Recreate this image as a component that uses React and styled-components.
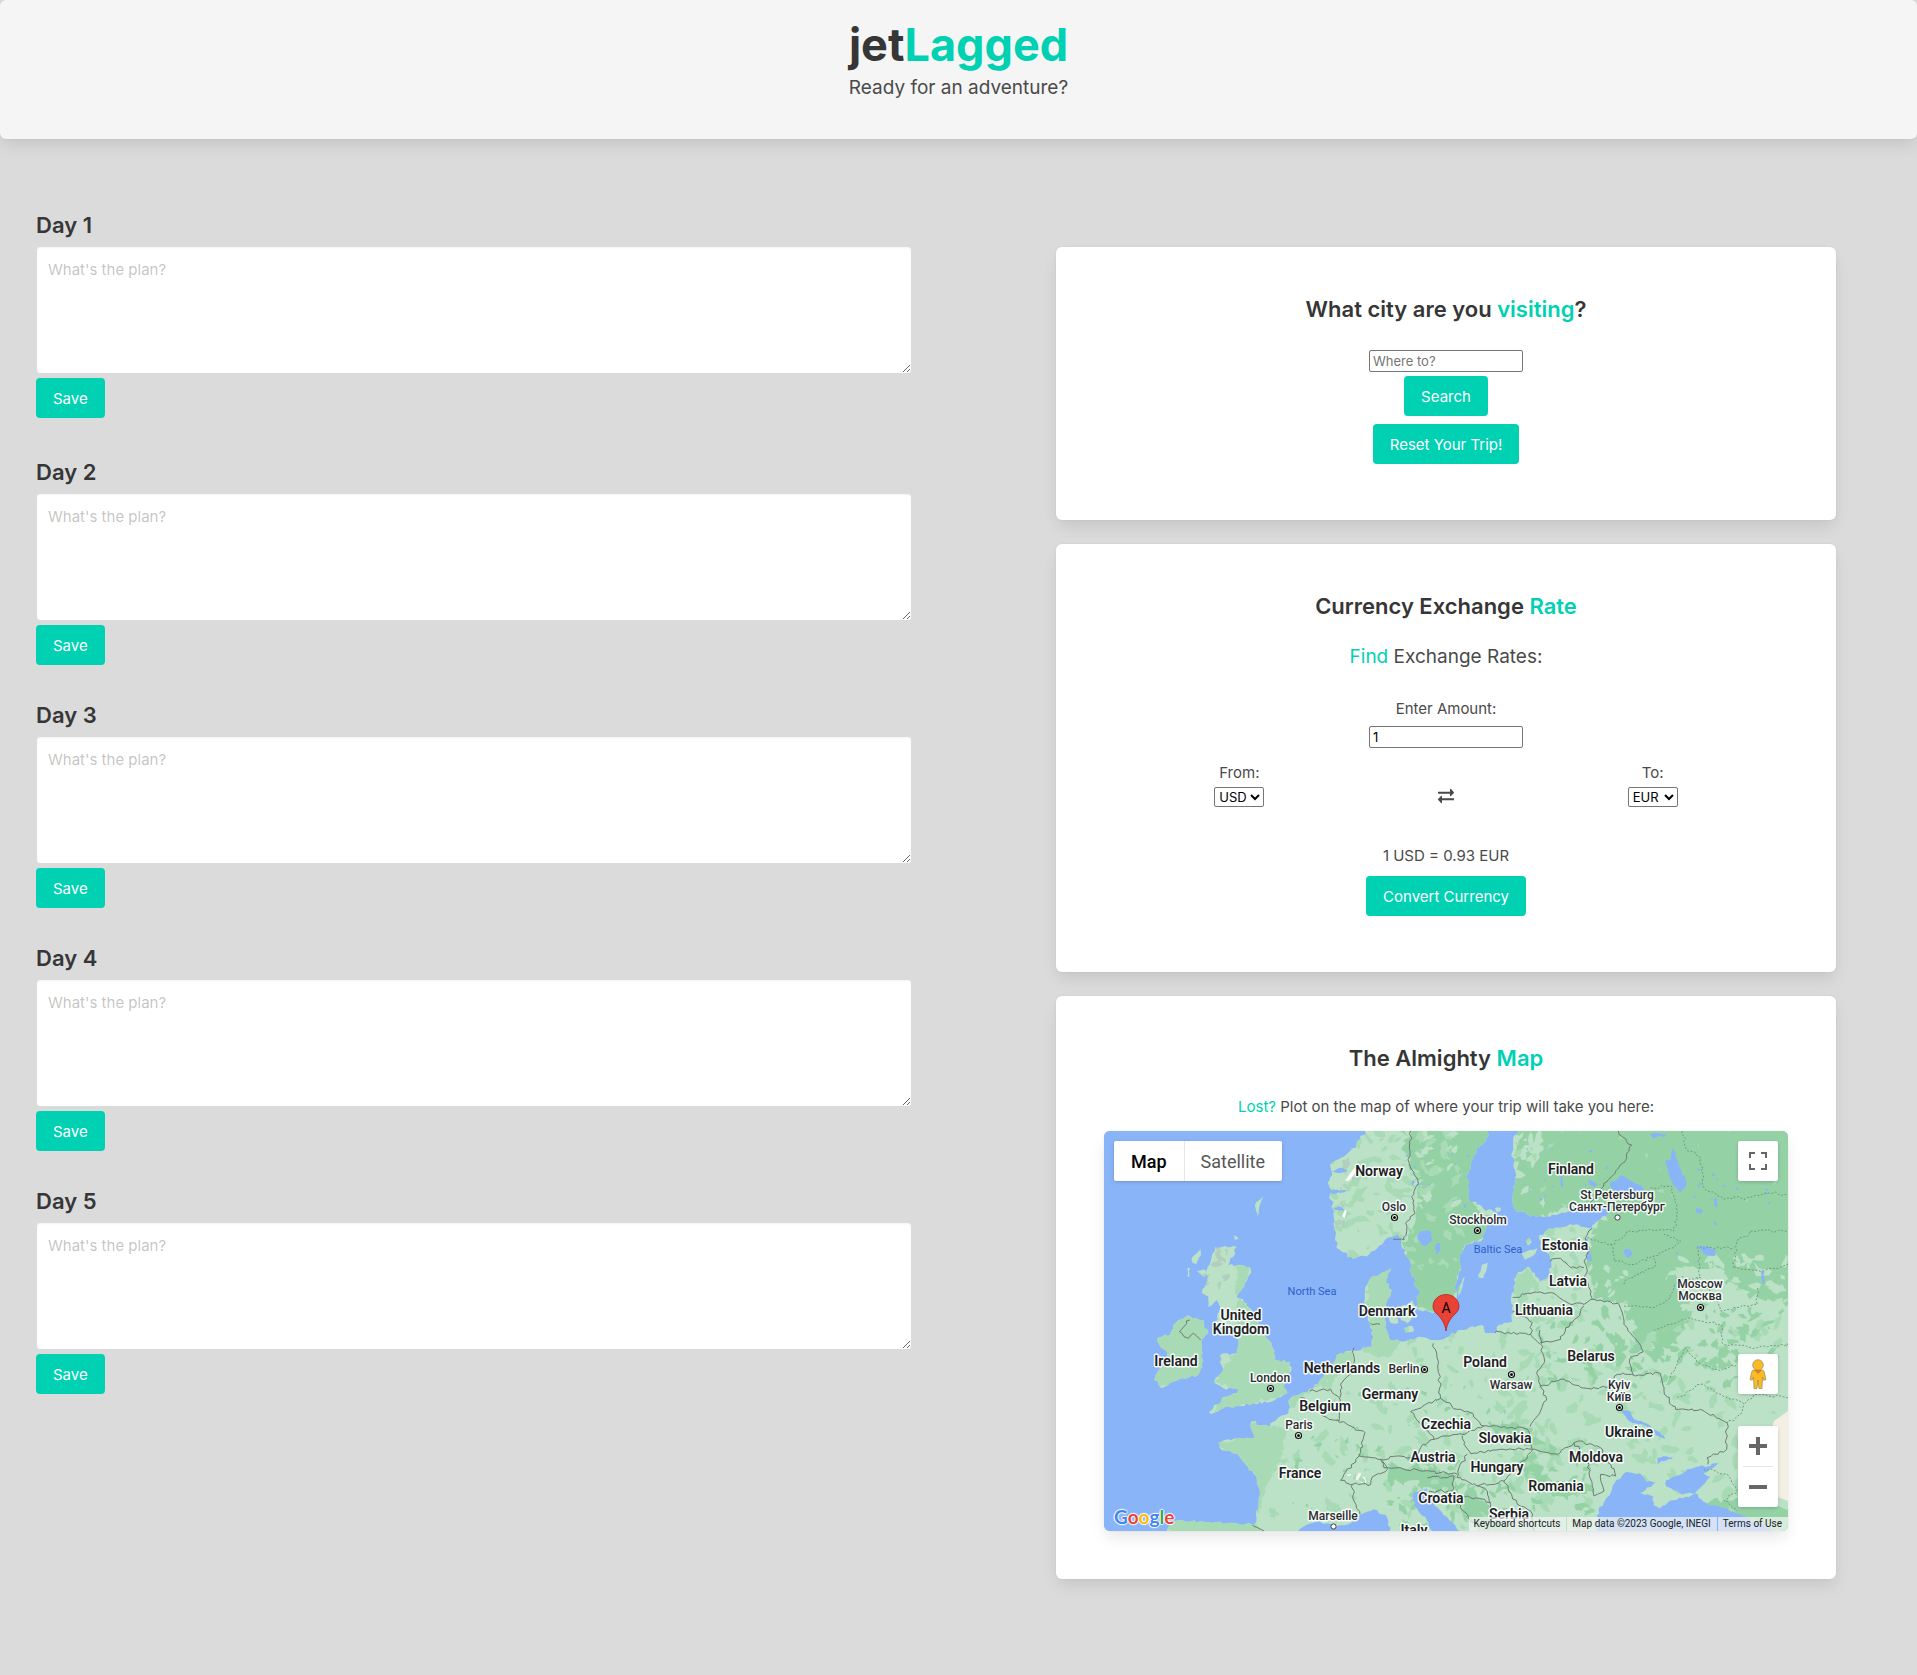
import React, { useState } from "react";
import styled, { createGlobalStyle } from "styled-components";

const colors = {
  primary: "#00d1b2",
  heading: "#363636",
  text: "#4a4a4a",
  page: "#dbdbdb",
  water: "#8ab4f8",
  landLight: "#bbe2c6",
  landMid: "#a8dab5",
  landDark: "#94d2a5",
};

const boxShadow =
  "0 8px 16px -2px rgba(10, 10, 10, 0.1), 0 0 0 1px rgba(10, 10, 10, 0.02)";

const GlobalStyle = createGlobalStyle`
  *, *::before, *::after { box-sizing: border-box; }
  body {
    margin: 0;
    background: ${colors.page};
    color: ${colors.text};
    font-family: Inter, "Liberation Sans", sans-serif;
    font-size: 15px;
    line-height: 24px;
  }
  h1, h2, p { margin: 0; }
`;

const Header = styled.header`
  background: #f5f5f5;
  border-radius: 6px;
  box-shadow: ${boxShadow};
  padding: 18px 20px 39px;
  text-align: center;
`;

const Brand = styled.h1`
  margin-bottom: 3px;
  color: ${colors.heading};
  font-size: 45px;
  font-weight: 700;
  line-height: 54px;
`;

const Accent = styled.span`
  color: ${colors.primary};
`;

const Lead = styled.p`
  font-size: 19px;
  line-height: 25px;
`;

const Main = styled.main`
  display: grid;
  grid-template-columns: minmax(0, 876fr) minmax(0, 780fr);
  column-gap: 144px;
  padding: 72px 81px 96px 36px;
`;

const Days = styled.section`
  display: flex;
  flex-direction: column;
  gap: 36px;
`;

const Day = styled.form`
  display: flex;
  flex-direction: column;
  align-items: flex-start;

  &:first-child {
    padding-bottom: 4px;
  }
`;

const Title = styled.h2`
  color: ${colors.heading};
  font-size: 22px;
  font-weight: 600;
  line-height: 29px;
`;

const Plan = styled.textarea`
  display: block;
  width: 100%;
  height: 128px;
  margin: 6px 0 4px;
  padding: 11px;
  border: 1px solid ${colors.page};
  border-radius: 4px;
  background: #fff;
  box-shadow: inset 0 1px 2px rgba(10, 10, 10, 0.05);
  color: ${colors.heading};
  font: inherit;
  resize: vertical;

  &::placeholder {
    color: rgba(54, 54, 54, 0.3);
  }
`;

const Button = styled.button`
  height: 40px;
  padding: 1px 17px 0;
  border: 0;
  border-radius: 4px;
  background: ${colors.primary};
  color: #fff;
  font: inherit;
  cursor: pointer;
`;

const Tools = styled.section`
  display: flex;
  flex-direction: column;
  gap: 24px;
  padding-top: 36px;
`;

const Card = styled.article`
  display: flex;
  flex-direction: column;
  align-items: center;
  padding: 48px 48px ${(p) => p.$bottom || 56}px;
  border-radius: 6px;
  background: #fff;
  box-shadow: ${boxShadow};
  text-align: center;
`;

const SearchForm = styled.form`
  display: flex;
  flex-direction: column;
  align-items: center;
  gap: 4px;
  margin: 26px 0 8px;
`;

const TextField = styled.input`
  width: 154px;
  height: 22px;
  padding: 1px 3px;
  border: 1px solid #767676;
  border-radius: 2px;
  background: #fff;
  color: #000;
  font-family: inherit;
  font-size: 13px;

  &::placeholder {
    color: #757575;
  }
`;

const ExchangeLead = styled(Lead)`
  margin: 23px 0 28px;
`;

const Amount = styled.div`
  display: flex;
  flex-direction: column;
  align-items: center;
  gap: 5px;
`;

const Currencies = styled.div`
  display: grid;
  grid-template-columns: repeat(3, 1fr);
  align-items: end;
  justify-items: center;
  align-self: stretch;
  margin: 13px 0 37px;
  padding: 0 32px;
`;

const Currency = styled.div`
  display: flex;
  flex-direction: column;
  align-items: center;
  gap: 2px;
`;

const Select = styled.select`
  width: 50px;
  height: 20px;
  padding: 0;
  border: 1px solid #767676;
  border-radius: 2px;
  background-color: #fff;
  color: #000;
  font-family: inherit;
  font-size: 13px;
`;

const Swap = styled.svg`
  width: 16px;
  height: 16px;
  margin-bottom: 3px;
  fill: ${colors.text};
`;

const Result = styled.p`
  margin-bottom: 8px;
`;

const MapLead = styled.p`
  margin: 22px 0 12px;
`;

const MapFrame = styled.div`
  position: relative;
  height: 400px;
  overflow: hidden;
  border-radius: 6px;
  background: ${colors.water};
  font-family: Roboto, sans-serif;
`;

const MapShadow = styled.div`
  align-self: stretch;
  border-radius: 6px;
  box-shadow: ${boxShadow};
`;

const MapCanvas = styled.svg`
  display: block;
  width: 100%;
  height: 100%;
`;

const CountryName = styled.text`
  fill: #202124;
  stroke: #fff;
  stroke-width: 3px;
  stroke-linejoin: round;
  stroke-opacity: 0.9;
  paint-order: stroke;
  font-size: 14px;
  font-weight: 600;
  text-anchor: middle;
`;

const CityName = styled(CountryName)`
  fill: #2b2e30;
  font-size: 12px;
  font-weight: 500;
`;

const SeaName = styled.text`
  fill: #2a62c9;
  font-size: 11px;
  text-anchor: middle;
`;

const PinLetter = styled.text`
  fill: #000;
  font-size: 14px;
  text-anchor: middle;
`;

const Control = styled.div`
  position: absolute;
  display: flex;
  flex-direction: ${(p) => (p.$row ? "row" : "column")};
  align-items: center;
  top: ${(p) => p.$top}px;
  ${(p) => (p.$left ? "left" : "right")}: 10px;
  border-radius: 2px;
  background: #fff;
  box-shadow: 0 1px 4px -1px rgba(0, 0, 0, 0.3);
`;

const MapType = styled.button`
  height: 40px;
  padding: 0 17px;
  border: 0;
  background: none;
  color: ${(p) => (p.$active ? "#000" : "#565656")};
  font-family: inherit;
  font-size: 18px;
  font-weight: ${(p) => (p.$active ? 500 : 400)};
  cursor: pointer;

  & + & {
    padding-left: 16px;
    border-left: 1px solid #e6e6e6;
  }
`;

const IconButton = styled.button`
  display: grid;
  place-items: center;
  width: 40px;
  height: 40px;
  padding: 0;
  border: 0;
  background: none;
  cursor: pointer;
`;

const Divider = styled.span`
  width: 30px;
  height: 1px;
  background: #e6e6e6;
`;

const Credits = styled.div`
  position: absolute;
  right: 0;
  bottom: 0;
  display: flex;
  height: 14px;
  color: #202124;
  font-size: 10px;
  line-height: 14px;
  white-space: nowrap;
`;

const creditItem = `
  height: 14px;
  padding: 0 6px 0 5px;
  border: 0;
  background: rgba(245, 245, 245, 0.7);
  color: inherit;
  font: inherit;
  text-decoration: none;
`;

const CreditButton = styled.button`
  ${creditItem}
`;
const CreditText = styled.span`
  ${creditItem}
  margin: 0 1px;
`;
const CreditLink = styled.a`
  ${creditItem}
`;

const Logo = styled.a`
  position: absolute;
  left: 10px;
  bottom: 0;
  font-family: Lato, sans-serif;
  font-size: 19px;
  font-weight: 700;
  line-height: 28px;
  text-decoration: none;
  text-shadow: 1px 0 1px #fff, -1px 0 1px #fff, 0 1px 1px #fff, 0 -1px 1px #fff;
`;

const Letter = styled.span`
  color: ${(p) => p.$tone};
`;

/* ---- map geometry: three units per pixel ---- */

const continent =
  "1243,0 1233,12 1223,67 1236,127 1226,187 1233,237 1298,259 1358,252 1438,222 1498,227 1518,242 1488,267 1463,292 1408,282 1338,292 1306,312 1308,347 1338,377 1338,427 1308,452 1293,427 1270,407 1238,432 1223,487 1226,572 1183,582 1173,607 1143,605 1133,582 1068,597 1008,627 988,627 948,617 898,632 858,627 848,597 843,537 863,477 845,455 863,412 843,422 798,442 783,482 786,537 798,577 808,617 803,647 748,657 698,672 688,697 658,737 628,772 558,802 553,847 508,872 498,887 458,882 455,869 441,872 450,922 398,922 343,932 353,957 398,967 418,992 458,1037 468,1087 458,1162 448,1182 398,1177 298,1172 218,1169 193,1187 190,1210 573,1210 598,1187 648,1172 698,1187 738,1177 768,1152 808,1135 848,1157 863,1210 988,1210 968,1167 933,1127 925,1087 968,1072 973,1097 1008,1137 1048,1177 1078,1210 2062,1210 2062,-10 1243,-10";
const scandinavia =
  "793,-10 758,37 718,77 678,102 683,122 676,167 683,227 688,277 693,327 708,357 748,385 788,377 828,342 863,317 883,297 893,327 908,377 923,427 943,477 943,537 988,547 1025,540 1048,527 1063,437 1073,367 1083,342 1138,322 1148,287 1178,272 1173,247 1118,222 1093,197 1093,127 1108,77 1138,37 1158,-10";
const britain =
  "333,347 398,347 388,377 373,402 438,407 441,427 423,457 398,497 428,517 443,537 470,590 485,617 503,637 513,687 558,692 561,722 538,767 550,787 503,812 448,817 398,825 358,832 323,849 315,845 353,802 398,787 403,775 358,772 330,752 358,717 348,672 398,667 403,627 400,600 360,600 333,577 348,537 338,507 308,537 313,497 293,487 308,457 308,417 323,377";
const ireland =
  "163,617 198,612 213,577 248,555 298,567 313,607 293,627 293,657 296,707 283,732 238,742 173,772 150,747 158,727 180,705 188,660 163,637";
const islands = [
  "453,222 478,195 470,215 461,257 456,238",
  "390,312 400,318 404,324 392,326",
  "262,385 290,355 291,372 277,400 266,395",
  "278,420 300,415 310,428 300,438",
  "250,412 258,410 256,437 250,437",
  "888,527 908,522 925,507 935,532 928,557 910,577 890,567",
  "850,550 878,553 883,577 862,577",
  "900,590 925,585 930,600 905,604",
  "1123,437 1133,402 1151,395 1148,415 1138,442 1126,440",
  "1060,480 1086,427 1076,467 1063,495",
  "1253,367 1278,357 1300,352 1293,370 1263,387",
  "1266,332 1278,322 1283,334 1272,344",
  "1173,232 1190,230 1190,240 1178,244",
];
const blackSea =
  "1478,1210 1483,1137 1518,1092 1538,1047 1568,1022 1608,1027 1628,1052 1655,1055 1608,1085 1648,1097 1648,1122 1668,1132 1698,1109 1738,1102 1773,1087 1808,1117 1888,1142 1990,1185 2010,1210";
const azov =
  "1688,1067 1686,1048 1708,1037 1768,1012 1843,997 1798,1027 1818,1037 1788,1072 1773,1087 1728,1087";
const lakes = [
  "940,320 955,300 975,298 985,325 962,345 948,335",
  "996,340 1012,335 1008,360 994,380",
  "1518,157 1535,150 1553,132 1580,150 1608,162 1630,187 1600,187 1568,200 1530,180",
  "1683,90 1700,87 1708,47 1722,90 1748,157 1728,185 1700,147",
  "1558,360 1576,355 1586,370 1568,380",
  "1776,342 1800,345 1835,355 1830,375 1806,372",
  "1442,322 1452,325 1464,388 1454,392 1445,350",
  "1372,135 1378,138 1376,170 1368,160",
  "1452,145 1480,160 1472,168 1455,158",
  "1775,232 1798,238 1790,250 1776,244",
  "1830,202 1842,205 1838,230 1830,222",
  "1640,10 1660,5 1688,12 1650,22",
  "1974,418 1982,425 1980,470 1975,455",
  "1545,828 1580,845 1590,865 1640,885 1640,890 1575,870",
  "1650,895 1680,915 1684,925 1655,912",
  "1660,980 1706,978 1704,984 1672,990 1655,1008",
  "676,182 720,176 740,180 720,184 684,188",
  "683,120 715,110 730,118 700,126",
  "686,232 706,226 722,236 700,238",
];
const darkRegions = [
  "893,-10 1170,-10 1110,220 1180,290 1080,350 1050,527 990,550 940,530 900,350 935,250 945,150 900,60",
  "1243,-10 2062,-10 2062,530 1900,480 1830,400 1700,420 1660,530 1560,520 1470,500 1450,380 1470,290 1530,240 1440,215 1300,262 1220,240",
  "1560,480 1720,430 1760,560 1700,650 1600,640",
  "1160,870 1270,890 1370,975 1350,985 1260,930 1170,905",
  "860,1000 960,1010 1060,1040 1050,1090 980,1070 900,1050 840,1065",
  "1100,1060 1150,1120 1220,1200 1120,1200 1050,1120",
  "1240,1000 1290,960 1340,1060 1450,1070 1420,1100 1300,1090",
  "1808,1117 1900,1100 2062,1130 2062,1210 1990,1200",
];
const midRegions = [
  "398,400 441,407 423,457 398,497 443,537 503,637 561,700 550,787 323,849 353,802 403,775 330,752 403,640",
  "150,555 313,555 313,660 296,740 150,772",
  "441,872 498,887 553,900 530,980 490,1060 458,1162 448,1030 343,940 398,922",
  "783,412 863,412 848,597 900,632 850,680 748,657 800,640",
  "700,672 748,657 740,720 628,772 560,830 556,802",
  "1226,487 1236,432 1270,410 1300,452 1250,540",
  "193,1165 448,1175 470,1210 190,1210",
];
const borders = [
  "920,0 918,60 916,97 943,157 923,197 933,247 908,272 900,327 868,325",
  "1543,0 1583,42 1568,82 1498,167 1458,217",
  "1465,292 1445,320 1455,350 1440,390 1450,420 1440,440 1455,470 1465,505",
  "1338,392 1370,382 1400,410 1440,410",
  "1226,500 1270,487 1350,487 1400,520 1440,520 1465,505",
  "1465,505 1510,510 1545,520 1560,580 1600,630 1618,662 1578,682 1588,732",
  "1588,732 1668,727 1680,780 1715,835 1790,835 1870,877 1868,955 1810,980 1812,1000",
  "1310,765 1370,745 1430,770 1510,770 1540,730 1588,732",
  "1308,597 1320,697 1298,727 1328,807 1278,887",
  "1308,633 1370,625 1385,590 1420,560 1440,525",
  "1173,605 1280,610 1285,575 1226,540",
  "1280,610 1308,640",
  "988,637 1003,697 1010,802",
  "1010,802 965,820 920,842 960,890 990,925 1030,915 1090,905 1140,885 1100,845 1060,835 1010,802",
  "1140,885 1180,885 1270,895 1285,955 1200,955 1100,968 1080,940 1075,915",
  "1090,970 1065,1010 1060,1040 1120,1065 1200,1050 1240,1010 1285,955",
  "990,925 950,950 940,980 880,975 830,985 840,1010 900,1015 960,1020 1060,1030",
  "1285,955 1360,970 1410,935",
  "1410,935 1450,990 1470,1095 1500,1080 1490,1030 1535,1035 1520,1000 1490,950 1430,930 1410,935",
  "700,865 740,885 783,905 765,975",
  "765,975 720,1030 710,1048 745,1060 800,1060 810,1035 850,1015 830,985 765,975",
  "745,1060 750,1110 768,1150",
  "618,780 680,775 705,800 705,870 670,860 620,820 590,800",
  "750,650 745,720 710,760 708,800",
  "1120,1065 1150,1080 1160,1120 1180,1180",
  "1200,1050 1240,1120 1280,1140 1290,1200",
  "1160,1115 1090,1095 1050,1100 1100,1170 1150,1190",
  "970,1040 1050,1035 1045,1080 975,1080",
  "258,567 226,602 253,622 268,607 290,627",
  "445,1182 480,1200",
  "800,577 828,580",
];
const provinces = [
  "1735,0 1745,50 1790,80 1800,170 1860,205 1930,200 1990,185 2052,190",
  "1640,170 1700,165 1720,240 1710,300 1580,300 1520,340",
  "1450,320 1520,340 1530,390 1590,400 1650,375 1710,350 1730,330 1680,310",
  "1560,460 1580,440 1650,410 1650,375",
  "1890,410 1900,330 1950,300 2052,300",
  "1890,410 1980,420 2052,400",
  "1560,525 1650,530 1700,500 1720,440 1790,440 1780,350 1890,350",
  "1780,440 1830,490 1850,540 1960,520 1960,470",
  "1650,600 1700,580 1760,560 1850,580 1860,640 1960,650 2052,640",
  "1700,740 1740,650 1790,700 1850,720 1900,700",
  "1720,800 1790,760 1850,790 1920,820 1960,790 2052,800",
  "1870,877 1910,850 1920,820",
  "1800,1015 1870,1030 1900,1080 1860,1110 1900,1140",
];

function makeRandom(seed) {
  let s = seed;
  return () => {
    s = (s * 16807) % 2147483647;
    return s / 2147483647;
  };
}

const parse = (list) => list.split(" ").map((pair) => pair.split(",").map(Number));

/* Breaks each straight run into short jagged steps so coasts look natural. */
function roughen(list, amount, closed) {
  const random = makeRandom(list.length * 97 + 11);
  const points = parse(list);
  const out = [];
  const last = closed ? points.length : points.length - 1;
  for (let i = 0; i < last; i += 1) {
    const [x1, y1] = points[i];
    const [x2, y2] = points[(i + 1) % points.length];
    const steps = Math.max(1, Math.round(Math.hypot(x2 - x1, y2 - y1) / 10));
    out.push([x1, y1]);
    for (let k = 1; k < steps; k += 1) {
      const t = k / steps;
      out.push([
        Math.round(x1 + (x2 - x1) * t + (random() - 0.5) * amount),
        Math.round(y1 + (y2 - y1) * t + (random() - 0.5) * amount),
      ]);
    }
  }
  if (!closed) out.push(points[points.length - 1]);
  return `M${out.map((p) => p.join(" ")).join("L")}${closed ? "Z" : ""}`;
}

/* Scatters small irregular terrain patches over a rectangle. */
function patches(seed, x, y, w, h, count, size) {
  const random = makeRandom(seed);
  let d = "";
  for (let i = 0; i < count; i += 1) {
    const cx = x + random() * w;
    const cy = y + random() * h;
    const r = size * (0.3 + random());
    const tilt = random() * Math.PI;
    const corners = [];
    for (let k = 0; k < 9; k += 1) {
      const a = (k / 9) * Math.PI * 2;
      const rad = r * (0.4 + random() * 0.9);
      const px = Math.cos(a) * rad;
      const py = Math.sin(a) * rad * 0.5;
      corners.push(
        `${Math.round(cx + px * Math.cos(tilt) - py * Math.sin(tilt))} ${Math.round(
          cy + px * Math.sin(tilt) + py * Math.cos(tilt)
        )}`
      );
    }
    d += `M${corners.join("L")}Z`;
  }
  return d;
}

const landPath = [
  roughen(continent, 9, true),
  roughen(scandinavia, 14, true),
  roughen(britain, 9, true),
  roughen(ireland, 10, true),
  ...islands.map((i) => roughen(i, 4, true)),
].join("");

const terrain = [
  [patches(21, 440, 600, 900, 600, 150, 22), colors.landMid],
  [patches(34, 1220, 560, 830, 620, 170, 24), colors.landMid],
  [patches(55, 676, 0, 230, 390, 60, 24), colors.landMid],
  [patches(13, 900, 0, 160, 260, 26, 24), colors.landMid],
  [patches(14, 900, 300, 170, 120, 14, 20), colors.landMid],
  [patches(77, 1230, 20, 90, 220, 18, 24), colors.landLight],
  [patches(78, 1240, 0, 780, 260, 20, 11), colors.landMid],
  [patches(81, 1250, 280, 200, 300, 50, 18), colors.landMid],
  [patches(82, 1460, 400, 110, 100, 12, 15), colors.landLight],
  [patches(91, 1720, 380, 330, 260, 60, 22), colors.landLight],
  [patches(92, 1600, 520, 450, 240, 80, 20), colors.landDark],
  [patches(93, 1300, 540, 300, 230, 40, 22), colors.landDark],
  [patches(94, 740, 700, 500, 330, 34, 12), colors.landDark],
  [patches(95, 560, 900, 230, 250, 14, 14), colors.landDark],
  [patches(96, 860, 990, 420, 200, 60, 16), colors.landDark],
  [patches(97, 1290, 980, 180, 200, 20, 18), colors.landDark],
  [patches(98, 900, 0, 170, 240, 26, 16), colors.landLight],
  [patches(99, 700, 20, 60, 340, 10, 14), "#b1cfbc"],
  [patches(44, 300, 340, 90, 140, 12, 18), "#b1cfbc"],
  [patches(45, 1440, 60, 600, 340, 30, 6), colors.water],
  [patches(46, 910, 60, 240, 320, 26, 6), colors.water],
  [patches(47, 1270, 20, 240, 200, 20, 5), colors.water],
  [patches(48, 735, 1020, 70, 40, 6, 11), "#f1f5f2"],
];

const countries = [
  ["Norway", 275, 45],
  ["United", 137, 189],
  ["Kingdom", 137, 203],
  ["Denmark", 283, 185],
  ["Finland", 467, 43],
  ["Estonia", 461, 119],
  ["Latvia", 464, 155],
  ["Lithuania", 440, 184],
  ["Ireland", 72, 235],
  ["Netherlands", 238, 242],
  ["Germany", 286, 268],
  ["Belgium", 221, 280],
  ["France", 196, 347],
  ["Czechia", 342, 298],
  ["Austria", 329, 331],
  ["Croatia", 337, 372],
  ["Italy", 310, 404],
  ["Serbia", 405, 388],
  ["Poland", 381, 236],
  ["Belarus", 487, 230],
  ["Slovakia", 401, 312],
  ["Ukraine", 525, 306],
  ["Moldova", 492, 331],
  ["Hungary", 393, 341],
  ["Romania", 452, 360],
];

const cities = [
  ["Oslo", 290, 80],
  ["Stockholm", 374, 93],
  ["St Petersburg", 513, 68],
  ["Санкт-Петербург", 513, 80],
  ["Moscow", 596, 157],
  ["Москва", 596, 169],
  ["London", 166, 251],
  ["Berlin", 300, 242],
  ["Paris", 195, 298],
  ["Marseille", 229, 389],
  ["Warsaw", 407, 258],
  ["Kyiv", 515, 258],
  ["Київ", 515, 270],
];

const capitals = [
  [290, 86],
  [373, 99],
  [596, 176],
  [166, 257],
  [320, 238],
  [194, 304],
  [407, 243],
  [515, 276],
];
const towns = [
  [513, 86],
  [229, 395],
];

function EuropeMap() {
  return (
    <MapCanvas viewBox="0 0 684 400" preserveAspectRatio="xMidYMid slice" role="img" aria-label="Map of Europe">
      <defs>
        <clipPath id="land">
          <path d={landPath} />
        </clipPath>
      </defs>
      <rect width="684" height="400" fill={colors.water} />
      <g transform="scale(0.33333)">
        <path d={landPath} fill={colors.landLight} />
        <g clipPath="url(#land)">
          {midRegions.map((r) => (
            <path key={r} d={roughen(r, 16, true)} fill={colors.landMid} />
          ))}
          {darkRegions.map((r) => (
            <path key={r} d={roughen(r, 24, true)} fill={colors.landDark} />
          ))}
          {terrain.map(([d, fill]) => (
            <path key={d.slice(0, 40)} d={d} fill={fill} />
          ))}
          <path d="M2052 840L2010 870L1990 940L2000 1090L2052 1110Z" fill="#f3efe3" />
          <path d="M733 150L742 142L756 120L752 110L738 128L724 148ZM714 255L724 235L728 240L722 262Z" fill="#fff" />
        </g>
        <path d={roughen(blackSea, 8, true)} fill={colors.water} />
        <path d={roughen(azov, 8, true)} fill={colors.water} />
        {lakes.map((l) => (
          <path key={l} d={roughen(l, 7, true)} fill={colors.water} />
        ))}
        <g fill="none" stroke="#6c7a72" strokeWidth="3">
          {borders.map((b) => (
            <path key={b} d={roughen(b, 9, false)} />
          ))}
        </g>
        <g fill="none" stroke="#6f9c7e" strokeWidth="3" strokeDasharray="6 5">
          {provinces.map((b) => (
            <path key={b} d={roughen(b, 10, false)} />
          ))}
        </g>
      </g>
      {capitals.map(([x, y]) => (
        <g key={`${x}-${y}`}>
          <circle cx={x + 0.5} cy={y + 0.5} r="3" fill="#fff" stroke="#111" strokeWidth="1.2" />
          <circle cx={x + 0.5} cy={y + 0.5} r="1.5" fill="#111" />
        </g>
      ))}
      {towns.map(([x, y]) => (
        <circle key={`${x}-${y}`} cx={x + 0.5} cy={y + 0.5} r="2.6" fill="#fff" stroke="#3c4043" strokeWidth="1" />
      ))}
      <SeaName x="208" y="164">North Sea</SeaName>
      <SeaName x="394" y="122">Baltic Sea</SeaName>
      {cities.map(([name, x, y]) => (
        <CityName key={name} x={x} y={y}>{name}</CityName>
      ))}
      {countries.map(([name, x, y]) => (
        <CountryName key={name} x={x} y={y}>{name}</CountryName>
      ))}
      <path
        d="M342 200C341 192 337 187 333 183C330 180 329 178 329 175.500C329 168.500 335 163.500 342 163.500C349 163.500 355 168.500 355 175.500C355 178 354 180 351 183C347 187 343 192 342 200Z"
        fill="#ea4335"
        stroke="#b31412"
        strokeWidth="0.7"
      />
      <PinLetter x="342" y="182">A</PinLetter>
    </MapCanvas>
  );
}

function FullscreenIcon() {
  return (
    <svg width="18" height="18" viewBox="0 0 18 18" fill="#666">
      <path d="M0 0v6h2V2h4V0H0zM16 0h-4v2h4v4h2V0h-2zM16 16h-4v2h6v-6h-2v4zM2 12H0v6h6v-2H2v-4z" />
    </svg>
  );
}

function PegmanIcon() {
  return (
    <svg width="18" height="30" viewBox="0 0 18 30" stroke="#8a7a50" strokeWidth="0.6">
      <path d="M5 11h8c1.500 0 2 1 2.300 2.300L17 20.500l-2.200.8L13.500 18l-.5 11.500h-3L9 21l-1 8.500H5L4.500 18l-1.300 3.300L1 20.500l1.700-7.200C3 12 3.500 11 5 11z" fill="#fbbc23" />
      <path d="M5 11h8l-4 4z" fill="#e8772c" stroke="none" />
      <circle cx="9" cy="6" r="5.300" fill="#fbbc23" />
    </svg>
  );
}

function ZoomIcon({ plus }) {
  return (
    <svg width="18" height="18" viewBox="0 0 18 18" fill="#666">
      <path d="M0 7h18v4H0z" />
      {plus && <path d="M7 0h4v18H7z" />}
    </svg>
  );
}

const logoLetters = [
  ["G", "#4285f4"],
  ["o", "#ea4335"],
  ["o", "#fbbc04"],
  ["g", "#4285f4"],
  ["l", "#34a853"],
  ["e", "#ea4335"],
];

function DayPlan({ number }) {
  const id = `day-${number}`;
  return (
    <Day onSubmit={(e) => e.preventDefault()}>
      <Title>
        <label htmlFor={id}>Day {number}</label>
      </Title>
      <Plan id={id} placeholder="What's the plan?" />
      <Button>Save</Button>
    </Day>
  );
}

function CurrencyPicker({ id, label, value }) {
  return (
    <Currency>
      <label htmlFor={id}>{label}</label>
      <Select id={id} defaultValue={value}>
        <option>USD</option>
        <option>EUR</option>
        <option>GBP</option>
      </Select>
    </Currency>
  );
}

export default function App() {
  const [amount, setAmount] = useState("1");
  return (
    <>
      <GlobalStyle />
      <Header>
        <Brand>
          jet<Accent>Lagged</Accent>
        </Brand>
        <Lead>Ready for an adventure?</Lead>
      </Header>
      <Main>
        <Days>
          {[1, 2, 3, 4, 5].map((n) => (
            <DayPlan key={n} number={n} />
          ))}
        </Days>
        <Tools>
          <Card>
            <Title>
              What city are you <Accent>visiting</Accent>?
            </Title>
            <SearchForm onSubmit={(e) => e.preventDefault()}>
              <TextField type="text" placeholder="Where to?" aria-label="City" />
              <Button>Search</Button>
            </SearchForm>
            <Button type="button">Reset Your Trip!</Button>
          </Card>
          <Card>
            <Title>
              Currency Exchange <Accent>Rate</Accent>
            </Title>
            <ExchangeLead>
              <Accent>Find</Accent> Exchange Rates:
            </ExchangeLead>
            <Amount>
              <label htmlFor="amount">Enter Amount:</label>
              <TextField id="amount" type="text" value={amount} onChange={(e) => setAmount(e.target.value)} />
            </Amount>
            <Currencies>
              <CurrencyPicker id="from" label="From:" value="USD" />
              <Swap viewBox="0 0 16 16" aria-hidden="true">
                <path d="M0 3.800h12V1.500c0-.6.6-.9 1-.5l2.700 2.900c.4.400.4.900 0 1.300L13 8c-.4.400-1 .1-1-.5V5.800H0zM16 12.200H4v2.300c0 .6-.6.9-1 .5L.3 12.100c-.4-.4-.4-.9 0-1.300L3 8c.4-.4 1-.1 1 .5v1.700h12z" />
              </Swap>
              <CurrencyPicker id="to" label="To:" value="EUR" />
            </Currencies>
            <Result>1 USD = 0.93 EUR</Result>
            <Button type="button">Convert Currency</Button>
          </Card>
          <Card $bottom={48}>
            <Title>
              The Almighty <Accent>Map</Accent>
            </Title>
            <MapLead>
              <Accent>Lost?</Accent> Plot on the map of where your trip will take you here:
            </MapLead>
            <MapShadow>
              <MapFrame>
                <EuropeMap />
                <Control $left $row $top={10}>
                  <MapType type="button" $active>Map</MapType>
                  <MapType type="button">Satellite</MapType>
                </Control>
                <Control $top={10}>
                  <IconButton type="button" aria-label="Toggle fullscreen view">
                    <FullscreenIcon />
                  </IconButton>
                </Control>
                <Control $top={223}>
                  <IconButton type="button" aria-label="Open Street View">
                    <PegmanIcon />
                  </IconButton>
                </Control>
                <Control $top={295}>
                  <IconButton type="button" aria-label="Zoom in">
                    <ZoomIcon plus />
                  </IconButton>
                  <Divider />
                  <IconButton type="button" aria-label="Zoom out">
                    <ZoomIcon />
                  </IconButton>
                </Control>
                <Logo href="#maps" aria-label="Google">
                  {logoLetters.map(([letter, tone], i) => (
                    <Letter key={i} $tone={tone}>{letter}</Letter>
                  ))}
                </Logo>
                <Credits>
                  <CreditButton type="button">Keyboard shortcuts</CreditButton>
                  <CreditText>Map data ©2023 Google, INEGI</CreditText>
                  <CreditLink href="#terms">Terms of Use</CreditLink>
                </Credits>
              </MapFrame>
            </MapShadow>
          </Card>
        </Tools>
      </Main>
    </>
  );
}
